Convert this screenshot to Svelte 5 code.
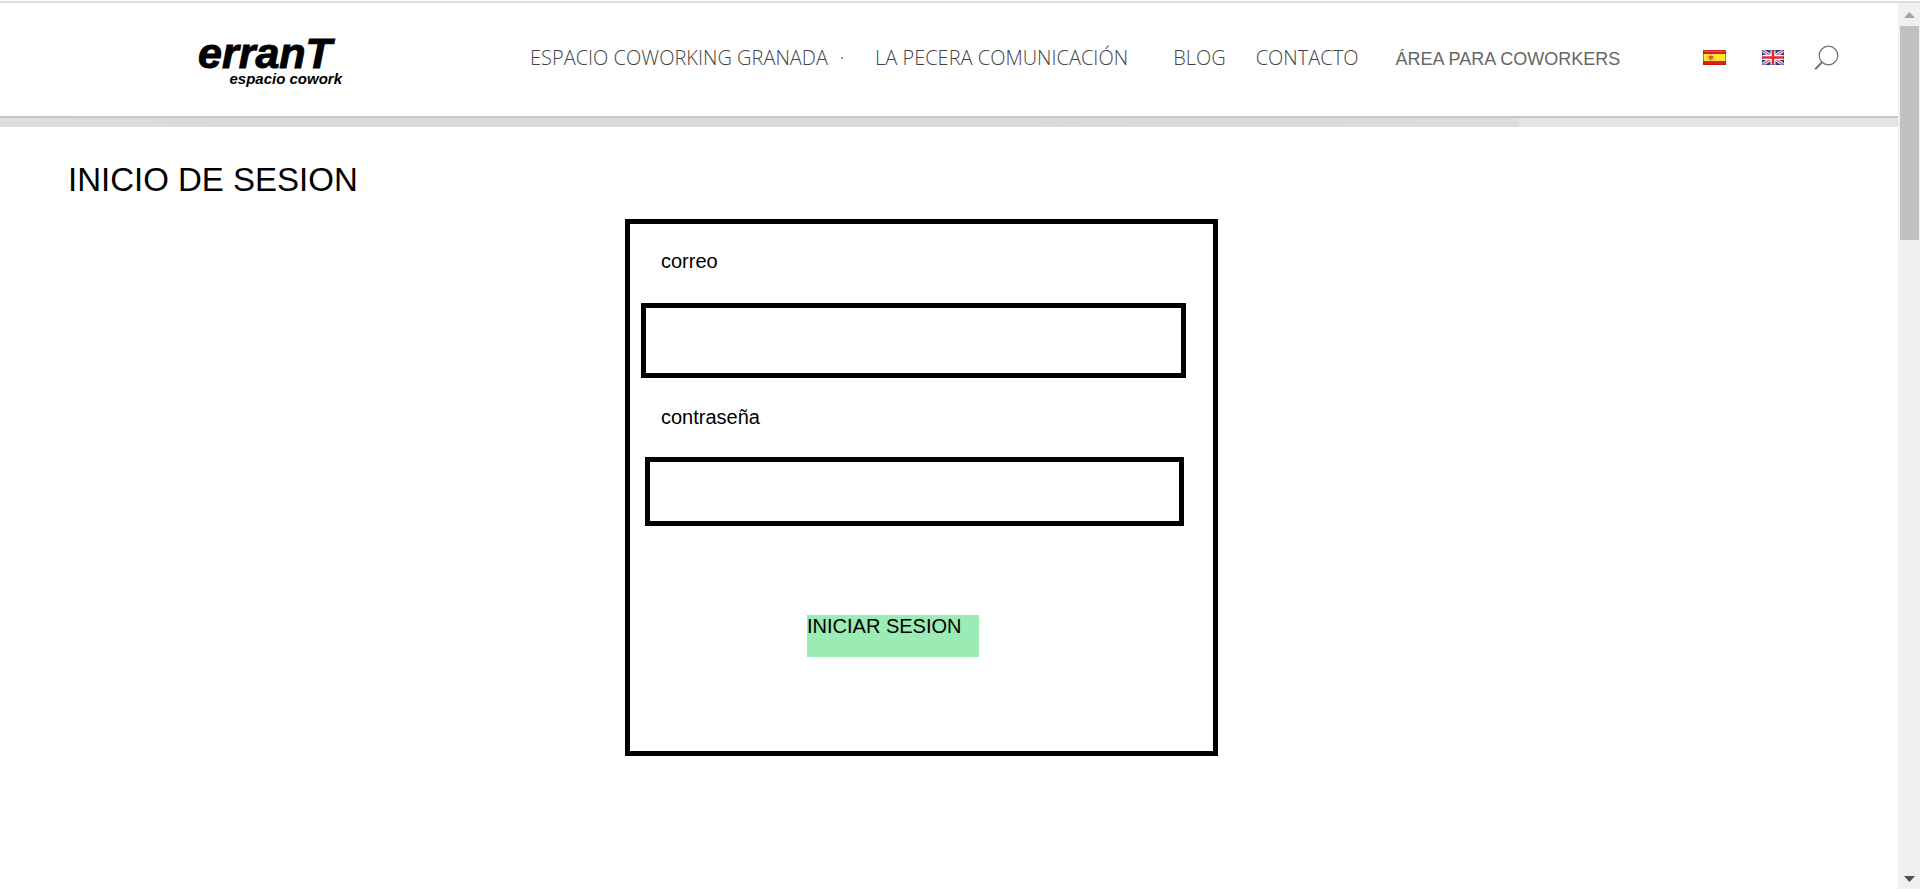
<script>
  let email = $state('');
  let password = $state('');
</script>

<div class="window">
  <div class="page">
    <header>
      <a class="logo" href="#inicio">
        <span class="brand">erranT</span>
        <span class="tagline">espacio cowork</span>
      </a>
      <nav>
        <a class="parent" href="#granada">ESPACIO COWORKING GRANADA<i class="caret"></i></a>
        <a class="pecera" href="#pecera">LA PECERA COMUNICACIÓN</a>
        <a class="blog" href="#blog">BLOG</a>
        <a class="contact" href="#contacto">CONTACTO</a>
        <a class="area" href="#area">ÁREA PARA COWORKERS</a>
      </nav>
      <div class="tools">
        <a href="#es" aria-label="Español">
          <svg width="23" height="15" viewBox="0 0 23 15">
            <rect width="23" height="15" fill="#d8201c" />
            <rect width="23" height="2" fill="#ee5148" />
            <rect y="4" width="23" height="7" fill="#ffe82e" />
            <rect x="0.5" y="0.5" width="22" height="14" fill="none" stroke="#b51513" stroke-opacity=".6" />
            <path d="M5 5.500v5M11 6v4.500" stroke="#e0b060" />
            <path d="M6 6h4v3l-2 1.500-2-1.500z" fill="#d8572c" />
            <path d="M6.500 5h3" stroke="#b98a55" />
            <path d="M8 8h1.500v1.500H8z" fill="#c79aa0" />
          </svg>
        </a>
        <a href="#en" aria-label="English">
          <svg width="22" height="15" viewBox="0 0 22 15">
            <rect width="22" height="15" fill="#29418f" />
            <path d="M0 0l22 15M22 0L0 15" stroke="#f4f4fa" stroke-width="3.200" />
            <path d="M0 0l22 15M22 0L0 15" stroke="#e0515c" stroke-width="1.200" />
            <path d="M11 0v15M0 7.500h22" stroke="#fff" stroke-width="5" />
            <path d="M11 0v15M0 7.500h22" stroke="#e02a3a" stroke-width="2.600" />
            <rect x="0.5" y="0.5" width="21" height="14" fill="none" stroke="#26377c" stroke-opacity=".35" />
          </svg>
        </a>
        <button class="search" type="button" aria-label="Buscar">
          <svg width="25" height="26" viewBox="0 0 25 26" fill="none" stroke="#747474">
            <circle cx="14.500" cy="10.500" r="9.300" stroke-width="1.300" />
            <path d="M8 17.300L1.200 24.300" stroke-width="2" />
          </svg>
        </button>
      </div>
    </header>
    <div class="strip"></div>
    <main>
      <h1>INICIO DE SESION</h1>
      <div class="columns">
        <form onsubmit={(e) => e.preventDefault()}>
          <label for="email">correo</label>
          <input id="email" class="email" type="email" bind:value={email} />
          <label for="password">contraseña</label>
          <input id="password" class="password" type="password" bind:value={password} />
          <button class="submit" type="submit">INICIAR SESION</button>
        </form>
      </div>
    </main>
  </div>
  <div class="scrollbar" aria-hidden="true">
    <svg width="11" height="6" viewBox="0 0 11 6"><path d="M0 6L5.500 0 11 6z" fill="#a3a3a3" /></svg>
    <div class="thumb"></div>
    <svg class="down" width="11" height="6" viewBox="0 0 11 6"><path d="M0 0h11L5.500 6z" fill="#505050" /></svg>
  </div>
</div>

<style>
  :global(body) {
    margin: 0;
    background: #fff;
  }
  .window {
    box-sizing: border-box;
    min-height: 100vh;
    display: flex;
    margin-right: 4px;
    padding: 1px 0 3px;
    background: linear-gradient(#dadce4, #dadce4) 0 1px / 100% 2px no-repeat;
    font-family: "Liberation Sans", Arial, sans-serif;
    color: #000;
  }
  .page {
    flex: 1;
    min-width: 0;
    padding-top: 2px;
  }
  header {
    box-sizing: border-box;
    display: flex;
    align-items: center;
    height: 113px;
    padding: 0 59px 4px 198px;
    white-space: nowrap;
  }
  a {
    color: #444;
    text-decoration: none;
  }
  .logo {
    display: flex;
    flex-direction: column;
    width: 144px;
    padding-top: 3px;
    color: #000;
    font-weight: bold;
    font-style: italic;
  }
  .brand {
    font-size: 43px;
    line-height: 39px;
    -webkit-text-stroke: 1px #000;
  }
  .tagline {
    align-self: flex-end;
    font-size: 15px;
    line-height: 12px;
  }
  nav {
    display: flex;
    align-items: center;
    margin-left: 188px;
    font: 300 20px/26px "Open Sans", sans-serif;
  }
  .parent {
    display: flex;
    align-items: center;
  }
  .caret {
    width: 2px;
    height: 2px;
    margin-left: 13px;
    background: #999;
  }
  .pecera {
    margin-left: 32px;
  }
  .blog {
    margin-left: 45px;
  }
  .contact {
    margin-left: 30px;
  }
  .area {
    margin-left: 37px;
    padding-top: 2px;
    color: #666;
    font: 18px/26px "Liberation Sans", Arial, sans-serif;
  }
  .tools {
    display: flex;
    align-items: center;
    gap: 36px;
    margin-left: auto;
  }
  .tools svg {
    display: block;
  }
  .search {
    margin-left: -6px;
    padding: 0;
    border: 0;
    background: none;
  }
  .strip {
    height: 9px;
    border-top: 2px solid #c6c6c6;
    background: linear-gradient(90deg, #dedede, #d9d9d9 18%, #dcdcdc 80%, #e4e4e4 80%);
  }
  h1 {
    margin: 0;
    padding: 34px 0 21px 68px;
    font-size: 33px;
    font-weight: normal;
    line-height: 37px;
  }
  .columns {
    display: grid;
    grid-template-columns: 625fr 593fr 680fr;
  }
  form {
    grid-column: 2;
    box-sizing: border-box;
    display: flex;
    flex-direction: column;
    align-items: flex-start;
    padding: 25px 27px 94px 11px;
    border: 5px solid #000;
    font-size: 20px;
    line-height: 24px;
  }
  label {
    margin-left: 20px;
  }
  input {
    box-sizing: border-box;
    padding: 0 16px;
    border: 5px solid #000;
    border-radius: 0;
    background: #fff;
    font: inherit;
    outline: 0;
  }
  .email {
    align-self: stretch;
    height: 75px;
    margin: 30px 0 27px;
  }
  .password {
    align-self: stretch;
    height: 69px;
    margin: 28px 2px 0 4px;
  }
  .submit {
    display: flex;
    align-items: flex-start;
    width: 172px;
    height: 42px;
    margin: 89px 0 0 166px;
    padding: 0;
    border: 0;
    background: #9bebb5;
    color: #000;
    font: inherit;
    line-height: 22px;
    white-space: nowrap;
  }
  .scrollbar {
    display: flex;
    flex-direction: column;
    align-items: center;
    width: 22px;
    margin-top: 2px;
    padding: 9px 0 7px;
    box-sizing: border-box;
    background: #f0f0f0;
  }
  .thumb {
    width: 19px;
    height: 214px;
    margin-top: 8px;
    background: #c1c1c1;
  }
  .down {
    margin-top: auto;
  }
</style>
